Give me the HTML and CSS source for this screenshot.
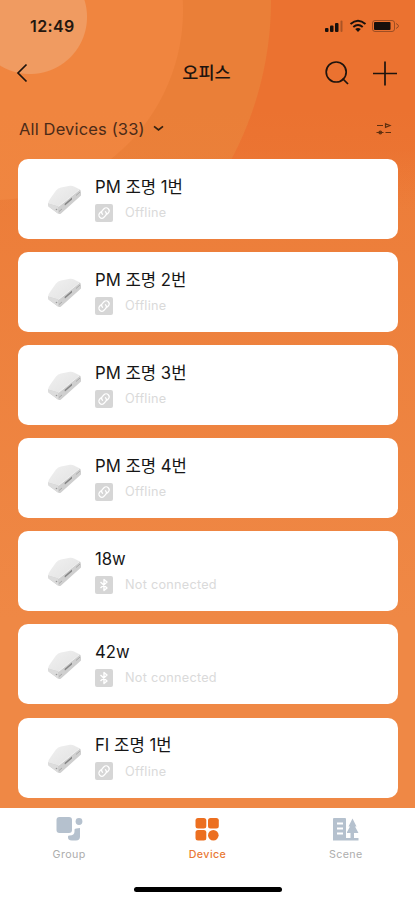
FILE: index.html
```html
<!DOCTYPE html>
<html lang="ko">
<head>
<meta charset="utf-8">
<title>오피스</title>
<link rel="stylesheet" href="styles.css">
</head>
<body>
<svg class="defs" width="0" height="0" aria-hidden="true">
  <defs>
    <linearGradient id="top" x1="0" y1="0" x2="1" y2="1"><stop offset="0" stop-color="#f1f1f1"/><stop offset="1" stop-color="#e0e0e0"/></linearGradient>
    <symbol id="module" viewBox="0 0 36 32">
      <path d="M2 20Q2.500 16.500 5 13.500L10 6.500Q12 4.300 15 3.600L24 1.800Q26 1.500 28 2.500L34 5.500L35 7L13 25Z" fill="url(#top)"/>
      <path d="M2 19.500L12.500 22.500L33 5.800Q35 6 35 8.500V11.500L15 29.500Q13.500 30.700 11.500 29.200L2.500 22.500Z" fill="#cfcfcf"/>
      <path d="M2 19.500L12 22.500V29.500L2.500 22.500Z" fill="#dcdcdc"/>
      <path d="M12.500 22.500L33 6" stroke="#f2f2f2" stroke-width="1"/>
      <path d="M18.500 20L26 13.500V15.500L19 21.500Z" fill="#858585"/>
      <path d="M30 11.500L34 8M13 27.500L16 25" stroke="#aaa" stroke-width="1"/>
      <circle cx="10.500" cy="25.500" r=".8" fill="#999"/>
    </symbol>
    <symbol id="link" viewBox="0 0 18 18">
      <rect width="18" height="18" rx="2" fill="#d6d6d6"/>
      <g fill="none" stroke="#fff" stroke-width="1.200" stroke-linecap="round" transform="rotate(-45 9 9)">
        <path d="M8 6H6a3 3 0 0 0 0 6h2.500a3 3 0 0 0 2.500-3M10 12h2a3 3 0 0 0 0-6H9.500A3 3 0 0 0 7 9"/>
      </g>
    </symbol>
    <symbol id="bluetooth" viewBox="0 0 18 18">
      <rect width="18" height="18" rx="2" fill="#d6d6d6"/>
      <path d="M5.500 6L12 12L9 14.500V3.500L12 6L5.500 12" fill="none" stroke="#fff" stroke-width="1.400" stroke-linejoin="round"/>
    </symbol>
  </defs>
</svg>
<div class="screen">
  <div class="status">
    <span class="time">12:49</span>
    <svg width="76" height="14" viewBox="0 0 76 14">
      <g fill="#17100c"><rect x="1" y="9" width="3.500" height="4" rx="1"/><rect x="6" y="6.500" width="3.500" height="6.500" rx="1"/><rect x="11" y="4" width="3.500" height="9" rx="1"/><rect x="16.500" y="1.500" width="2" height="11.500" rx="1" opacity=".3"/></g>
      <g fill="none" stroke="#17100c" stroke-width="2"><path d="M26.500 5Q34 -1.500 41.500 5"/><path d="M29.300 8Q34 4 38.700 8"/></g>
      <path d="M31.200 10Q34 7.800 36.800 10L34 13Z" fill="#17100c"/>
      <rect x="48.500" y="1.500" width="22" height="11" rx="2.500" fill="none" stroke="#743b1d" stroke-opacity=".65"/>
      <rect x="50" y="3" width="16.500" height="8" rx="1" fill="#17100c"/>
      <path d="M72 4.500Q77 7 72 9.500" fill="none" stroke="#743b1d" stroke-opacity=".7"/>
    </svg>
  </div>
  <header class="nav">
    <svg class="back" width="12" height="20" viewBox="0 0 12 20"><path d="M10.500 1.500L2 10L10.500 18.500" fill="none" stroke="#1e140e" stroke-width="1.700"/></svg>
    <h1>오피스</h1>
    <div class="actions">
      <svg width="24" height="26" viewBox="0 0 24 26"><circle cx="11.200" cy="12" r="10" fill="none" stroke="#1e140e" stroke-width="1.700"/><path d="M17.500 18.500L23 24" stroke="#1e140e" stroke-width="1.700"/></svg>
      <svg width="24" height="26" viewBox="0 0 24 26"><path d="M0 13.500H24M12 1.500V25.500" stroke="#1e140e" stroke-width="1.700"/></svg>
    </div>
  </header>
  <div class="filter">
    <span>All Devices (33)</span>
    <svg width="11" height="7" viewBox="0 0 11 7"><path d="M1 1.300L5.500 5L10 1.300" fill="none" stroke="#35200f" stroke-width="1.700"/></svg>
    <svg class="sort" width="16" height="14" viewBox="0 0 16 14"><g fill="none" stroke="#60300f" stroke-width="1.200"><path d="M1 3.500H7M9.500 1.700L14 3.500L9.500 5.300ZM15 10.500H9.500M0.500 10.500H7.500"/><circle cx="4.300" cy="10.500" r="1.300"/></g></svg>
  </div>
  <main class="devices">
    <article><svg class="thumb"><use href="#module"/></svg><div class="info"><h2>PM 조명 1번</h2><p><svg><use href="#link"/></svg>Offline</p></div></article>
    <article><svg class="thumb"><use href="#module"/></svg><div class="info"><h2>PM 조명 2번</h2><p><svg><use href="#link"/></svg>Offline</p></div></article>
    <article><svg class="thumb"><use href="#module"/></svg><div class="info"><h2>PM 조명 3번</h2><p><svg><use href="#link"/></svg>Offline</p></div></article>
    <article><svg class="thumb"><use href="#module"/></svg><div class="info"><h2>PM 조명 4번</h2><p><svg><use href="#link"/></svg>Offline</p></div></article>
    <article><svg class="thumb"><use href="#module"/></svg><div class="info"><h2>18w</h2><p><svg><use href="#bluetooth"/></svg>Not connected</p></div></article>
    <article><svg class="thumb"><use href="#module"/></svg><div class="info"><h2>42w</h2><p><svg><use href="#bluetooth"/></svg>Not connected</p></div></article>
    <article><svg class="thumb"><use href="#module"/></svg><div class="info"><h2>FI 조명 1번</h2><p><svg><use href="#link"/></svg>Offline</p></div></article>
  </main>
  <nav class="tabs">
    <div class="tab-row">
      <div class="tab">
        <svg width="28" height="26" viewBox="0 0 28 26" fill="#b5c1ce"><rect x="1.500" y="1" width="15.500" height="16" rx="3"/><circle cx="24" cy="5.500" r="3.400"/><path d="M25 12V20.500Q25 24.500 21 24.500H17Q12.500 24.500 13 20.500Q13 19.500 14.500 19.500Q19.500 19.500 19.500 15.500V13.500Q20.500 12 25 12Z"/></svg>
        <span>Group</span>
      </div>
      <div class="tab active">
        <svg width="28" height="26" viewBox="0 0 28 26" fill="#ec6f20"><rect x="2.500" y="2" width="10.800" height="10.500" rx="2.500"/><rect x="15" y="2" width="10.800" height="10.500" rx="2.500"/><rect x="2.500" y="14" width="10.800" height="10.500" rx="2.500"/><circle cx="20.300" cy="19.300" r="5.300"/></svg>
        <span>Device</span>
      </div>
      <div class="tab">
        <svg width="28" height="26" viewBox="0 0 28 26"><path d="M1 3Q1 2 2 2H13Q14 2 14 3V22H18.500V17H14.500L18 10.500H16.500L20.500 2.500L24.500 10.500H23L26.500 17H22V22H26.500V24.500H1Z" fill="#b5c1ce"/><path d="M14.500 3V22" stroke="#fff"/><path d="M5 7.500H11M5 12.500H11M5 17.500H11" stroke="#fff" stroke-width="2"/></svg>
        <span>Scene</span>
      </div>
    </div>
    <div class="home"></div>
  </nav>
</div>
</body>
</html>
```
FILE: styles.css
```css
* { box-sizing: border-box; }
body { margin: 0; font-family: Inter, "Noto Sans CJK KR", sans-serif; }
.defs { position: absolute; }
.screen {
  width: 415px;
  height: 900px;
  overflow: hidden;
  display: flex;
  flex-direction: column;
  background:
    radial-gradient(circle at 30px 17px, #f09b61 56.5px, transparent 57.5px),
    linear-gradient(rgba(239, 136, 69, 0) 110px, rgba(239, 136, 69, .6) 400px, #ef8845 620px),
    radial-gradient(circle at -7px 10px, #f0853f 189.5px, transparent 190.5px),
    linear-gradient(transparent 150px, #ec7b37 210px),
    radial-gradient(circle at -69px 0, #ea7f38 339.5px, transparent 340.5px),
    #eb7230;
}
.status { height: 52px; padding: 0 15px 0 30px; display: flex; align-items: center; justify-content: space-between; }
.time { font-size: 16px; font-weight: 600; letter-spacing: .4px; color: #24170f; }
.nav { height: 42px; padding: 0 18px 0 16px; display: grid; grid-template-columns: 72px 1fr 72px; align-items: center; }
.nav h1 { margin: 0; font-size: 17.5px; line-height: 24px; font-weight: 500; text-align: center; color: #1e140e; }
.actions { display: flex; justify-content: space-between; }
.filter { height: 65px; padding: 4px 23px 0 19px; display: flex; align-items: center; font-size: 16.5px; letter-spacing: .15px; color: #4c2b18; }
.filter > svg { margin-left: 8px; }
.filter .sort { margin-left: auto; }
.devices { flex: none; height: 649px; padding: 0 17px 0 18px; display: flex; flex-direction: column; gap: 13.1px; }
.devices article { flex: none; height: 80px; border-radius: 10px; background: #fff; display: flex; align-items: center; padding-left: 28px; }
.thumb { width: 36px; height: 32px; margin-top: 2px; }
.info { margin-left: 13px; }
.info h2 { margin: 0; font-size: 16.7px; line-height: 20px; font-weight: 400; color: #161616; white-space: nowrap; }
.info p { margin: 7px 0 0; display: flex; align-items: center; height: 18px; font-size: 12.7px; letter-spacing: .25px; color: #dadada; }
.info p svg { width: 18px; height: 18px; margin-right: 12px; }
.tabs { flex: none; height: 92px; background: #fff; display: flex; flex-direction: column; align-items: center; justify-content: space-between; padding: 8px 0 8px; }
.tab-row { width: 100%; display: grid; grid-template-columns: repeat(3, 1fr); }
.tab { display: flex; flex-direction: column; align-items: center; color: #adadad; font-size: 10.7px; line-height: 14px; letter-spacing: .4px; }
.tab span { margin-top: 6px; }
.tab.active { color: #e97935; font-weight: 500; }
.home { width: 148px; height: 5px; border-radius: 3px; background: #000; }
```
